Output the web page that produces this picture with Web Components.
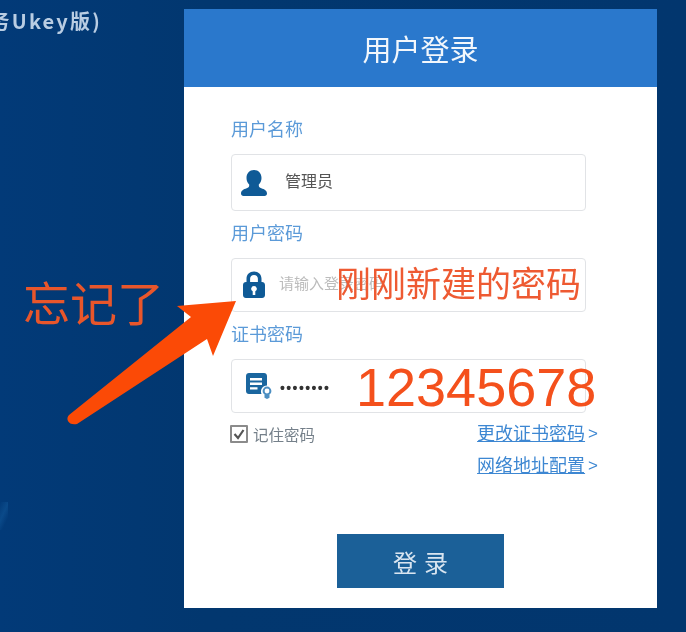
<!DOCTYPE html>
<html lang="zh">
<head>
<meta charset="utf-8">
<title>用户登录</title>
<style>
  html, body { margin: 0; height: 100%; }
  body {
    width: 686px;
    height: 632px;
    overflow: hidden;
    position: relative;
    display: flex;
    align-items: flex-start;
    font-family: "Noto Sans CJK SC", "Liberation Sans", sans-serif;
    background:
      linear-gradient(115deg, rgba(40, 130, 200, 0) 0, rgba(40, 130, 200, .22) 8px, rgba(40, 130, 200, 0) 14px) 0 502px / 8px 28px no-repeat,
      linear-gradient(90deg, #023a78 0%, #02376f 30%, #02366e 100%);
  }
  .name { color: #555; font-size: 16px; position: relative; top: -3px; }
  .hint { color: #bcbcbc; font-size: 15px; margin-left: -6px; position: relative; top: -3px; }
  .dots { color: #333; font-size: 14px; font-weight: 700; letter-spacing: 1.400px; margin-left: -5px; font-family: "Liberation Sans", sans-serif; }
</style>
</head>
<body>
<side-title>务Ukey版)</side-title>
<login-card>
  <form-field label="用户名称" height="57">
    <svg slot="icon" width="28" height="28" viewBox="0 0 28 28"><path fill="#0f5a96" d="M14 1c4.500 0 7.500 3.400 7.500 8 0 2.800-1.100 5.100-2.700 6.600v1c0 1.500 1 2.100 2.500 2.700 3 1.100 5.700 2.300 5.700 5.200 0 1.300-1 2.500-2.500 2.500H3.500C2 27 1 25.800 1 24.500c0-2.900 2.700-4.100 5.700-5.200 1.500-.6 2.500-1.200 2.500-2.700v-1C7.600 14.100 6.500 11.800 6.500 9 6.500 4.400 9.500 1 14 1z"/></svg>
    <span class="name">管理员</span>
  </form-field>
  <form-field label="用户密码" height="54">
    <svg slot="icon" width="28" height="30" viewBox="0 0 28 30"><path fill="#0f5a96" fill-rule="evenodd" d="M14 1.500c4.400 0 7.500 3 7.500 7.200V12H22c1.700 0 3 1.300 3 3v10c0 1.700-1.300 3-3 3H6c-1.700 0-3-1.300-3-3V15c0-1.700 1.300-3 3-3h.5V8.700C6.500 4.500 9.600 1.500 14 1.500zm0 3.600c-2.300 0-3.900 1.500-3.900 3.700V12h7.800V8.800c0-2.200-1.600-3.700-3.900-3.700zM14 16a2.800 2.800 0 0 0-1.300 5.300V25h2.600v-3.700A2.800 2.800 0 0 0 14 16z"/></svg>
    <span class="hint">请输入登录密码</span>
  </form-field>
  <form-field label="证书密码" height="54">
    <svg slot="icon" width="26" height="28" viewBox="0 0 26 28" style="margin-left:10px"><path fill="#1a669f" d="M3 1h15c1.700 0 3 1.300 3 3v9.500a6 6 0 0 0-5.500 8.500H3c-1.700 0-3-1.300-3-3V4c0-1.700 1.300-3 3-3z"/><path fill="#fff" d="M4 6h12v2.400H4zM4 10.600h12V13H4zM4 15.200h7.500v2.400H4z"/><circle cx="21" cy="19" r="3.400" fill="none" stroke="#4d8fc2" stroke-width="2"/><path fill="#4d8fc2" d="M18.500 22.500h5v3.200l-2.500 1.300-2.500-1.300z"/></svg>
    <span class="dots">••••••••</span>
  </form-field>
  <login-options>
    <link-item slot="links">更改证书密码</link-item>
    <link-item slot="links">网络地址配置</link-item>
  </login-options>
  <login-button>登录</login-button>
</login-card>

<note-text style="left:23px;top:270px;font-size:47px;color:#e8562b">忘记了</note-text>
<note-text style="left:336px;top:259px;font-size:35px;color:#ee5a32">刚刚新建的密码</note-text>
<note-text style="left:356px;top:352px;font-size:54px;color:#f4501c;font-family:'Liberation Sans',sans-serif">12345678</note-text>
<note-arrow></note-arrow>

<script>
"use strict";

// || SIDE TITLE ||
class sideTitle extends HTMLElement {
  constructor() {
    super();
    const shadow = this.attachShadow({ mode: "open" });
    shadow.innerHTML = `
    <style>
      :host {
        display: flex;
        justify-content: flex-end;
        flex: 0 0 184px;
        box-sizing: border-box;
        height: 42px;
        padding: 8px 82px 0 0;
        overflow: hidden;
        color: #b9cde3;
        font-size: 20px;
        font-weight: 700;
        letter-spacing: 2.200px;
        line-height: 26px;
        white-space: nowrap;
        filter: blur(.4px);
      }
    </style>
    <slot></slot>
    `;
  }
}

// || LOGIN CARD ||
class loginCard extends HTMLElement {
  constructor() {
    super();
    const shadow = this.attachShadow({ mode: "open" });
    shadow.innerHTML = `
    <style>
      :host {
        display: block;
        flex: 0 0 473px;
        min-width: 0;
        height: 599px;
        margin-top: 9px;
        background: #fff;
        filter: blur(.5px);
      }
      .head {
        height: 78px;
        display: flex;
        align-items: center;
        justify-content: center;
        background: #2a78cc;
        color: #f2f7fc;
        font-size: 29px;
        line-height: 1;
      }
      .body {
        padding: 20px 71px 0 47px;
      }
    </style>
    <div class="head">用户登录</div>
    <div class="body"><slot></slot></div>
    `;
  }
}

// || FIELD ||
class formField extends HTMLElement {
  constructor() {
    super();
    const shadow = this.attachShadow({ mode: "open" });
    shadow.innerHTML = `
    <style>
      :host {
        display: block;
        padding-top: 9px;
      }
      .label {
        height: 24px;
        margin-bottom: 14px;
        color: #5b9ad8;
        font-size: 18px;
        line-height: 24px;
      }
      .box {
        display: flex;
        align-items: center;
        box-sizing: border-box;
        border: 1.500px solid #e1e3e6;
        border-radius: 4px;
      }
      .icon {
        flex: 0 0 42px;
        display: flex;
        justify-content: center;
        margin-left: 1px;
      }
      .value {
        margin-left: 10px;
      }
    </style>
    <div class="label"></div>
    <div class="box">
      <div class="icon"><slot name="icon"></slot></div>
      <div class="value"><slot></slot></div>
    </div>
    `;
    shadow.querySelector(".label").textContent = this.getAttribute("label");
    shadow.querySelector(".box").style.height = this.getAttribute("height") + "px";
  }
}

// || OPTIONS ||
class loginOptions extends HTMLElement {
  constructor() {
    super();
    const shadow = this.attachShadow({ mode: "open" });
    shadow.innerHTML = `
    <style>
      :host {
        display: flex;
        justify-content: space-between;
        height: 121px;
        margin: 0 -12px 0 -1px;
      }
      .remember {
        display: flex;
        align-items: center;
        gap: 5px;
        height: 18px;
        margin-top: 12px;
        color: #75808a;
        font-size: 15.500px;
      }
      .box {
        width: 14px;
        height: 14px;
        border: 2px solid #8b8b8b;
        border-radius: 1px;
      }
      .links {
        display: flex;
        flex-direction: column;
        gap: 8px;
        padding-top: 7px;
      }
    </style>
    <div class="remember">
      <svg class="box" viewBox="0 0 14 14"><path d="M2.500 7l3.500 4L11.500 3" fill="none" stroke="#555" stroke-width="2.200"/></svg>
      <span>记住密码</span>
    </div>
    <div class="links"><slot name="links"></slot></div>
    `;
  }
}

class linkItem extends HTMLElement {
  constructor() {
    super();
    const shadow = this.attachShadow({ mode: "open" });
    shadow.innerHTML = `
    <style>
      :host {
        display: flex;
        height: 24px;
        color: #3d87d2;
        font-size: 18px;
        line-height: 24px;
        white-space: nowrap;
      }
      u { text-underline-offset: 1px; }
      .more { font-size: 17px; margin-left: 3px; padding-top: 2px; font-family: "Liberation Sans", sans-serif; }
    </style>
    <u><slot></slot></u><span class="more">&gt;</span>
    `;
  }
}

// || BUTTON ||
class loginButton extends HTMLElement {
  constructor() {
    super();
    const shadow = this.attachShadow({ mode: "open" });
    shadow.innerHTML = `
    <style>
      :host {
        display: flex;
        align-items: center;
        justify-content: center;
        width: 167px;
        height: 54px;
        margin-left: 106px;
        background: #1b6098;
        color: #d9e5f0;
        font-size: 24px;
        letter-spacing: 7px;
        text-indent: 7px;
      }
    </style>
    <slot></slot>
    `;
  }
}

// || ANNOTATIONS ||
class noteText extends HTMLElement {
  constructor() {
    super();
    const shadow = this.attachShadow({ mode: "open" });
    shadow.innerHTML = `
    <style>
      :host {
        display: block;
        position: absolute;
        white-space: nowrap;
        line-height: 1.300;
        filter: blur(.3px);
      }
    </style>
    <slot></slot>
    `;
  }
}

class noteArrow extends HTMLElement {
  constructor() {
    super();
    const shadow = this.attachShadow({ mode: "open" });
    shadow.innerHTML = `
    <style>
      :host {
        display: block;
        position: absolute;
        left: 0;
        top: 0;
        width: 240px;
        height: 440px;
        pointer-events: none;
      }
    </style>
    <svg width="240" height="440" viewBox="0 0 240 440">
      <path fill="#fb4a06" d="M236 301L177 306L191 317L69 415C65 419 69 426 77 424L207 339L213 356Z"/>
    </svg>
    `;
  }
}

customElements.define("side-title", sideTitle);
customElements.define("login-card", loginCard);
customElements.define("form-field", formField);
customElements.define("login-options", loginOptions);
customElements.define("link-item", linkItem);
customElements.define("login-button", loginButton);
customElements.define("note-text", noteText);
customElements.define("note-arrow", noteArrow);
</script>
</body>
</html>
